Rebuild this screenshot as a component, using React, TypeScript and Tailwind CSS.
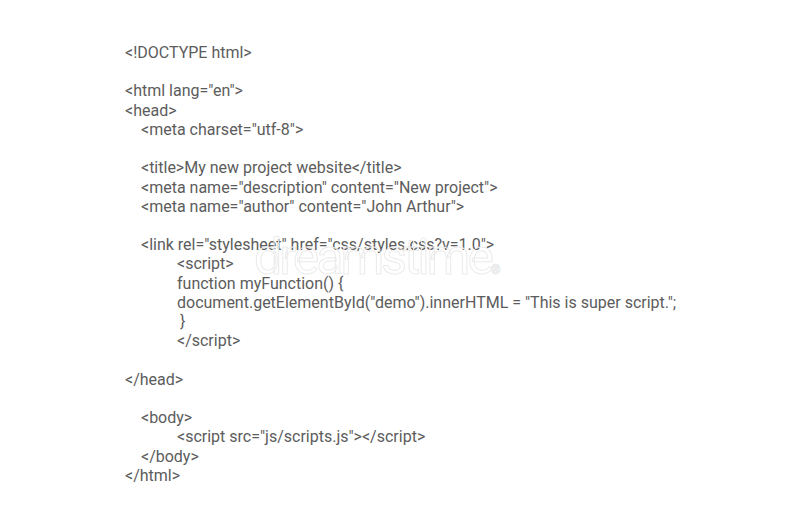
const lines: [number, string][] = [
  [0, "<!DOCTYPE html>"],
  [0, ""],
  [0, '<html lang="en">'],
  [0, "<head>"],
  [1, '<meta charset="utf-8">'],
  [0, ""],
  [1, "<title>My new project website</title>"],
  [1, '<meta name="description" content="New project">'],
  [1, '<meta name="author" content="John Arthur">'],
  [0, ""],
  [1, '<link rel="stylesheet" href="css/styles.css?v=1.0">'],
  [2, "<script>"],
  [2, "function myFunction() {"],
  [2, 'document.getElementById("demo").innerHTML = "This is super script.";'],
  [3, "}"],
  [2, "</script>"],
  [0, ""],
  [0, "</head>"],
  [0, ""],
  [1, "<body>"],
  [2, '<script src="js/scripts.js"></script>'],
  [1, "</body>"],
  [0, "</html>"],
];

const indent = ["pl-0", "pl-[16px]", "pl-[52px]", "pl-[55px]"];

export default function App() {
  return (
    <div className="relative w-[800px] h-[527px] bg-white overflow-hidden font-['Roboto',sans-serif]">
      <div className="pt-[43px] pl-[125px] text-[16px] leading-[19.23px] text-[#5c5c5c]">
        {lines.map(([lvl, text], i) => (
          <div key={i} className={`${indent[lvl]} h-[19.23px] whitespace-pre`}>
            {text}
          </div>
        ))}
      </div>
      {/* watermark */}
      <div className="absolute left-[254px] top-[232px] text-[50px] leading-none tracking-[-3px] text-transparent [-webkit-text-stroke:1px_#ebebeb] select-none">
        dreamstime<span className="text-[12px] align-baseline">®</span>
      </div>
    </div>
  );
}
